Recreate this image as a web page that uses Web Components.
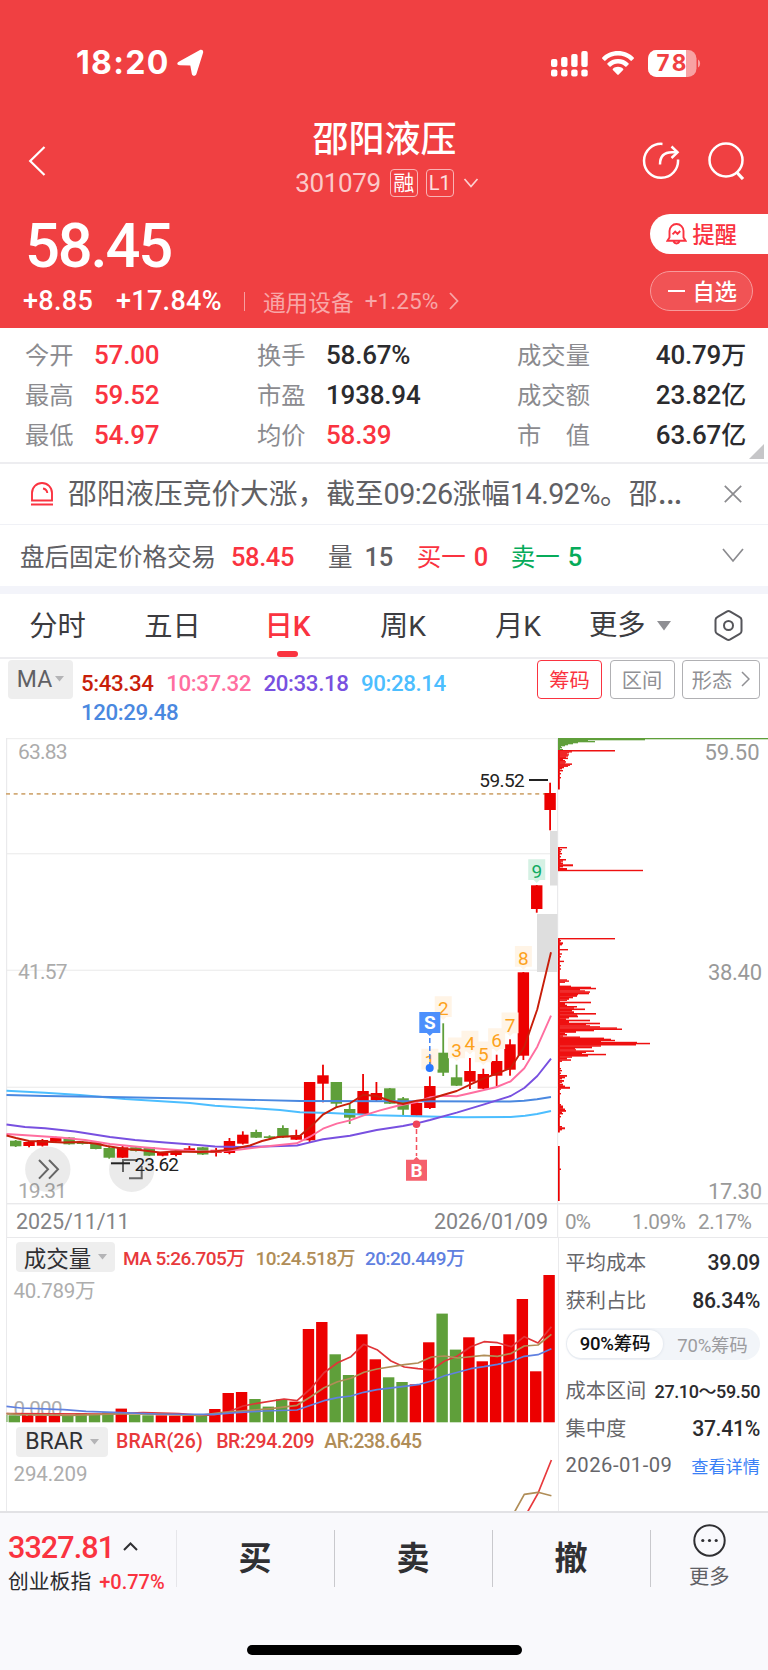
<!DOCTYPE html>
<html lang="zh-CN">
<head>
<meta charset="utf-8">
<title>邵阳液压 301079</title>
<style>
	html, body {
		margin: 0;
		padding: 0;
	}

	body {
		width: 768px;
		height: 1670px;
		overflow: hidden;
		background: #fff;
		font-family: Roboto, "Noto Sans CJK SC", sans-serif;
		color: #2b2b2e;
		--red: #fa3340;
		--green: #06ab5a;
		--head: #f04042;
		--line: #ededf0;
	}
</style>
</head>
<body>
<stock-page></stock-page>

<script>
// Base class: puts the styles and markup of a component into its shadow root
class UiElement extends HTMLElement {
	constructor() {
		super();
		this.attachShadow({ mode: 'open' });
	}

	connectedCallback() {
		this.shadowRoot.innerHTML = `
			<style>
				:host { display: block; box-sizing: border-box; }
				* { box-sizing: border-box; }
				svg { display: block; flex: none; }
				${this.styles()}
			</style>
			${this.html()}
		`;
	}

	styles() {
		return '';
	}

	html() {
		return '';
	}
}

class StatusBar extends UiElement {
	styles() {
		return `
			:host {
				display: flex;
				align-items: center;
				height: 110px;
				padding: 16px 67px 0 76px;
				color: #fff;
			}
			.time { font: 700 32px/40px Inter, sans-serif; width: 101px; letter-spacing: 1.3px; }
			.space { flex: 1; }
			.wifi { margin: 0 14px; }
		`;
	}

	html() {
		const bars = [8, 10, 13, 16].map((h, i) => `
			<rect x="${i * 10.1}" y="${17 - h}" width="6.4" height="${h}" rx="2"/>
			<rect x="${i * 10.1}" y="19.5" width="6.4" height="7" rx="2"/>`).join('');
		return `
			<span class="time">18:20</span>
			<svg width="27" height="28" viewBox="0 0 27 28"><path d="M2.2 12.6 22.5 1.3C24.8 0 26.8 1.4 26 4L19.4 25c-.8 2.5-4.2 2.3-4.6-.3L13.3 16.6 2.8 16.2C-.2 16-.5 14 2.2 12.6z" fill="#fff"/></svg>
			<span class="space"></span>
			<svg width="37" height="27" viewBox="0 0 37 27" fill="#fff">${bars}</svg>
			<svg class="wifi" width="32" height="24" viewBox="0 0 32 24" fill="#fff">
				<path d="M16 0C9.7 0 4 2.5.3 6.4c-.4.4-.4.9 0 1.3l1.9 1.9c.4.4 1 .4 1.3 0C6.7 6.4 11.1 4.6 16 4.6s9.3 1.8 12.5 5c.4.4 1 .4 1.3 0l1.9-1.9c.4-.4.4-.9 0-1.3C28 2.5 22.3 0 16 0z"/>
				<path d="M16 8c-4.1 0-7.8 1.6-10.5 4.2-.4.4-.4.9 0 1.3l2 1.9c.4.4.9.4 1.3 0 1.9-1.8 4.4-2.9 7.2-2.9s5.3 1.1 7.2 2.9c.4.4.9.4 1.3 0l2-1.9c.4-.4.4-.9 0-1.3C23.8 9.6 20.1 8 16 8z"/>
				<path d="M16 15.8c-2 0-3.7.7-5.1 1.9-.4.4-.4.9 0 1.3l4.4 4.6c.4.4 1 .4 1.4 0l4.400-4.600c.4-.4.4-.9 0-1.300-1.400-1.200-3.100-1.900-5.100-1.900z"/>
			</svg>
			<svg width="53" height="27" viewBox="0 0 53 27">
				<clipPath id="b"><rect width="48.5" height="27" rx="8.5"/></clipPath>
				<g clip-path="url(#b)"><rect width="49" height="27" fill="#f8a2a3"/><rect width="38" height="27" fill="#fff"/></g>
				<path d="M50 9.5c2.8 1.2 2.8 6.8 0 8z" fill="#f8a2a3"/>
				<text x="23.5" y="21.3" text-anchor="middle" font-family="Inter" font-weight="700" font-size="22.5" textLength="30" fill="#f04042">78</text>
			</svg>
		`;
	}
}

class StockHeader extends UiElement {
	styles() {
		return `
			:host { background: var(--head); color: #fff; height: 328px; }
			.nav { display: flex; height: 98px; padding: 0 23px 0 28px; align-items: flex-start; }
			.back { margin-top: 36px; }
			.mid { flex: 1; display: flex; flex-direction: column; align-items: center; padding-left: 81px; }
			.name { font-size: 36px; line-height: 40px; font-weight: 500; margin-top: 10px; }
			.code { display: flex; align-items: center; gap: 9px; margin-top: 8px; height: 30px; padding-left: 5px; font-size: 26px; color: #fbc9c9; }
			.code b { font-weight: 400; letter-spacing: -0.4px; }
			.tag { border: 1.5px solid #f9b3b4; border-radius: 4px; width: 28px; height: 28px; display: grid; place-items: center; font-size: 21px; line-height: 26px; color: #fff; }
			.tag.l { font-size: 20px; margin-left: -1px; color: #fde0e0; }
			.icons { display: flex; gap: 28px; margin-top: 32px; }
			.body { display: flex; justify-content: space-between; }
			.price { font-size: 61.5px; line-height: 64px; font-weight: 500; letter-spacing: -2.2px; padding: 6px 0 0 25px; }
			.change { display: flex; align-items: center; height: 30px; margin-top: 8px; padding-left: 23px; font-size: 27px; font-weight: 500; }
			.change span { letter-spacing: .3px; }
			.pct { margin-left: 23px; }
			.change i { width: 1px; height: 19px; background: #f79fa0; margin: 0 18px 0 22px; }
			.sector { display: flex; align-items: center; gap: 11px; font-size: 22.7px; font-weight: 400; color: #f8a6a7; }
			.sector span { letter-spacing: 0; }
			.pills { display: flex; flex-direction: column; align-items: flex-start; width: 118.5px; padding-top: 6px; gap: 17px; }
			.pill { display: flex; align-items: center; height: 40px; font-size: 22.2px; font-weight: 500; border-radius: 20px; }
			.warn { width: 118.5px; background: #fff; color: var(--red); border-radius: 20px 0 0 20px; padding: 0 0 2px 16px; gap: 6px; }
			.fav { width: 103px; background: rgba(255,255,255,.1); border: 1.5px solid #f79a9b; padding: 0 0 2px 17px; gap: 8px; }
			.fav i { width: 17px; height: 2px; background: #fff; margin-top: 2px; }
		`;
	}

	html() {
		return `
			<status-bar></status-bar>
			<div class="nav">
				<svg class="back" width="18" height="30" viewBox="0 0 18 30"><path d="M16.5 1 2.2 15 16.5 29" fill="none" stroke="#fff" stroke-width="2.2"/></svg>
				<div class="mid">
					<div class="name">邵阳液压</div>
					<div class="code"><b>301079</b><span class="tag">融</span><span class="tag l">L1</span>
						<svg width="16" height="10" viewBox="0 0 16 10"><path d="M1.5 1 8 8.5 14.5 1" fill="none" stroke="#fcd0d0" stroke-width="1.7"/></svg>
					</div>
				</div>
				<div class="icons">
					<svg width="38" height="38" viewBox="0 0 38 38" fill="none" stroke="#fff" stroke-width="2.5">
						<path d="M20.5 1.9A17 17 0 1 0 36 17.500M18 22.500c0-8 4-12.200 12-12.200h5"/><path d="m29.500 4.500 6 5.800-6 5.700"/>
					</svg>
					<svg width="37" height="38" viewBox="0 0 37 38" fill="none" stroke="#fff" stroke-width="2.5"><circle cx="18" cy="18" r="16.5"/><path d="m28.500 30 6.500 7" stroke-width="3.2"/></svg>
				</div>
			</div>
			<div class="body">
				<div>
					<div class="price">58.45</div>
					<div class="change"><span>+8.85</span><span class="pct">+17.84%</span><i></i>
						<div class="sector"><span>通用设备</span><span>+1.25%</span>
							<svg width="10" height="18" viewBox="0 0 10 18"><path d="m1 1 7.500 8L1 17" fill="none" stroke="#f8a6a7" stroke-width="1.8"/></svg>
						</div>
					</div>
				</div>
				<div class="pills">
					<div class="pill warn">
						<svg width="21" height="23" viewBox="0 0 21 23" fill="none" stroke="#fa3340" stroke-width="1.900">
							<path d="M3.500 15.500V9a7 7 0 0 1 14 0v6.500l2 3.200H1.500zM7.500 19.500a3.300 3.300 0 0 0 6 0"/><path d="m6.500 12.300 2.700-2.800 2.300 2.300 2.700-2.800"/>
						</svg>提醒</div>
					<div class="pill fav"><i></i>自选</div>
				</div>
			</div>
		`;
	}
}

class QuoteGrid extends UiElement {
	styles() {
		return `
			:host { position: relative; height: 136px; padding: 5px 22px 0 25px; border-bottom: 2px solid var(--line); }
			.row { display: flex; align-items: center; height: 40.2px; font-size: 26px; font-weight: 500; }
			.k { font-size: 24.300px; font-weight: 400; color: #8b8b8f; }
			.k1, .k2 { width: 69px; }
			.k3 { width: 73px; display: flex; justify-content: space-between; }
			.v { padding-top: 4px; line-height: 34px; letter-spacing: -0.2px; }
			.v1 { width: 163px; }
			.v2 { width: 191px; }
			.v3 { flex: 1; text-align: right; }
			.cjk { font-size: 25px; }
			.r { color: var(--red); }
			svg { position: absolute; right: 4px; bottom: 3px; }
		`;
	}

	html() {
		const rows = [
			['今开', '57.00', '换手', '58.67%', '', '成交量', '40.79', '万'],
			['最高', '59.52', '市盈', '1938.94', '', '成交额', '23.82', '亿'],
			['最低', '54.97', '均价', '58.39', 'r', '市值', '63.67', '亿'],
		];
		return rows.map(([k1, v1, k2, v2, cls, k3, v3, unit]) => `
			<div class="row">
				<span class="k k1">${k1}</span><span class="v v1 r">${v1}</span>
				<span class="k k2">${k2}</span><span class="v v2 ${cls}">${v2}</span>
				<span class="k k3">${[...k3].map((c) => `<span>${c}</span>`).join('')}</span>
				<span class="v v3">${v3}<span class="cjk">${unit}</span></span>
			</div>`).join('') + `
			<svg width="15" height="15"><path d="M15 0v15H0z" fill="#c6c6c8"/></svg>`;
	}
}

class NewsBar extends UiElement {
	styles() {
		return `
			:host { display: flex; align-items: center; height: 61px; padding: 0 26px 0 30px; border-bottom: 1.5px solid #f0f1f6; }
			p { margin: 0 0 0 14px; flex: 1; font-size: 28.7px; line-height: 40px; color: #606064; white-space: nowrap; }
			p b { font-weight: 400; letter-spacing: -0.5px; }
			p span { font-size: 38px; line-height: 0; }
		`;
	}

	html() {
		return `
			<svg width="24" height="24" viewBox="0 0 24 24" fill="none" stroke="#fa3340" stroke-width="1.900">
				<path d="M2 18.500v-7.500a10 10 0 0 1 20 0v7.500zM1 22.500h22"/><path d="M13 6.500c2.500.4 4 2 4.300 4.500"/>
			</svg>
			<p>邵阳液压竞价大涨，截至<b>09:26</b>涨幅<b>14.92%</b>。邵<span>…</span></p>
			<svg width="18" height="18" viewBox="0 0 18 18"><path d="m.8.8 16.400 16.400M17.200.8.8 17.200" stroke="#8b8b8f" stroke-width="1.700"/></svg>
		`;
	}
}

class AfterHoursBar extends UiElement {
	styles() {
		return `
			:host { display: flex; align-items: center; height: 69px; padding: 2px 24px 3px 20px; border-bottom: 8px solid #f3f4fa; font-size: 24.5px; color: #606064; white-space: nowrap; }
			b { font-weight: 500; font-size: 25.5px; padding-top: 3px; letter-spacing: -0.4px; }
			.r { color: var(--red); }
			.g { color: var(--green); }
			svg { margin-left: auto; }
		`;
	}

	html() {
		return `
			<span>盘后固定价格交易</span><b class="r" style="margin-left:15px">58.45</b>
			<span style="margin-left:34px">量</span><b style="margin-left:12px">15</b>
			<span class="r" style="margin-left:24px">买一</span><b class="r" style="margin-left:8px">0</b>
			<span class="g" style="margin-left:23px">卖一</span><b class="g" style="margin-left:8px">5</b>
			<svg width="22" height="15" viewBox="0 0 22 15"><path d="m1 1 10 12L21 1" fill="none" stroke="#8b8b8f" stroke-width="1.700"/></svg>
		`;
	}
}

class PeriodTabs extends UiElement {
	styles() {
		return `
			:host { display: grid; grid-template-columns: 115px 115px 115px 116px 114px 108px 85px; height: 64.5px; border-bottom: 2px solid var(--line); font-size: 28.3px; color: #3c3c40; white-space: nowrap; }
			div { display: flex; flex-direction: column; align-items: center; line-height: 65px; height: 63px; }
			.on { color: var(--red); font-weight: 500; }
			.on::after { content: ""; width: 21px; height: 6px; border-radius: 3px; background: var(--red); margin-top: -8px; }
			.more { flex-direction: row; gap: 11px; padding-left: 14px; }
			.set { flex-direction: row; justify-content: flex-end; padding-right: 25px; }
		`;
	}

	html() {
		return `
			<div>分时</div><div>五日</div><div class="on">日K</div><div>周K</div><div>月K</div>
			<div class="more">更多<svg width="14" height="10"><path d="M0 0h14L7 9.500z" fill="#8f8f93"/></svg></div>
			<div class="set"><svg width="29" height="31" viewBox="0 0 29 31" fill="none" stroke="#55555a" stroke-width="2">
				<path d="M12.700 1.600q1.800-1 3.600 0l9.400 5.500q1.800 1 1.800 3v10.800q0 2-1.800 3l-9.400 5.500q-1.800 1-3.600 0l-9.400-5.500q-1.800-1-1.800-3V10.100q0-2 1.800-3z"/><circle cx="14.500" cy="15.500" r="4.500"/>
			</svg></div>
		`;
	}
}

// Grey button with a small arrow, the label comes from the slot
class DropTag extends UiElement {
	styles() {
		return `
			:host { display: flex; align-items: center; justify-content: center; gap: 3px; background: #eee; border-radius: 4px; color: #303033; }
		`;
	}

	html() {
		return `<slot></slot><svg width="9" height="6"><path d="M0 0h9L4.500 5.500z" fill="#b4b4b6"/></svg>`;
	}
}

class IndicatorRow extends UiElement {
	styles() {
		return `
			:host { display: flex; height: 79.5px; padding: 1.500px 8px 0; }
			drop-tag { width: 65px; height: 38.500px; font-size: 23px; color: #606064; }
			.ma { flex: 1; padding: 9px 0 0 8px; display: flex; flex-wrap: wrap; align-content: flex-start; column-gap: 12.500px; font-size: 22.300px; line-height: 29px; font-weight: 500; letter-spacing: -0.400px; }
			.btns { display: flex; gap: 7.500px; }
			.btns span { display: flex; align-items: center; justify-content: center; gap: 9px; width: 65px; height: 38.500px; padding-bottom: 1px; border: 1.500px solid #b0b0b3; border-radius: 4px; font-size: 20.300px; color: #909094; }
			.btns .on { border-color: var(--red); color: var(--red); }
			.btns .w { width: 78px; }
		`;
	}

	html() {
		return `
			<drop-tag>MA</drop-tag>
			<div class="ma">
				<span style="color:#c81e0a">5:43.34</span><span style="color:#ff6ea0">10:37.32</span>
				<span style="color:#7850e0">20:33.18</span><span style="color:#4cbeff">90:28.14</span>
				<span style="color:#4a88e0">120:29.48</span>
			</div>
			<div class="btns"><span class="on">筹码</span><span>区间</span>
				<span class="w">形态<svg width="9" height="16" viewBox="0 0 9 16"><path d="m1 1 7 7-7 7" fill="none" stroke="#909094" stroke-width="1.500"/></svg></span>
			</div>
		`;
	}
}

// Small helpers for the chart markup
const UP = '#ec0000';
const DOWN = '#5f9f3a';
const text = (x, y, size, len, color, str, weight = 400) =>
	`<text x="${x}" y="${y}" font-size="${size}" textLength="${len}" fill="${color}" font-weight="${weight}">${str}</text>`;
const line = (pts, color, width = 1.9) =>
	`<polyline points="${pts}" fill="none" stroke="${color}" stroke-width="${width}" stroke-linejoin="round"/>`;
const rect = (x, y, w, h, color) => `<rect x="${x}" y="${y}" width="${w}" height="${h}" fill="${color}"/>`;

// body top, body bottom, high, low, 1 = up / 0 = down
const CANDLES = [
	[1140.7, 1146.3, 1140, 1147, 0], [1142, 1146, 1141, 1147.3, 1], [1140, 1145.7, 1139, 1146.5, 1],
	[1138, 1141.7, 1136.7, 1142, 1], [1137.5, 1144.3, 1137, 1144.5, 0], [1141.7, 1144, 1141, 1144.5, 0],
	[1143, 1149, 1143, 1149.3, 0], [1148, 1157.7, 1147, 1158.7, 0], [1147.3, 1157.7, 1146, 1158, 1],
	[1147.3, 1151, 1146.5, 1151.5, 0], [1147.3, 1155.7, 1147, 1156, 0], [1152.7, 1155.7, 1152, 1156.3, 1],
	[1150.7, 1155, 1150, 1156.3, 1], [1148.3, 1150.5, 1146, 1151, 1], [1147.3, 1154.5, 1147, 1155, 0],
	[1149.8, 1152.8, 1148, 1156.5, 1], [1141, 1153, 1138, 1154.3, 1], [1134.7, 1143.7, 1131.3, 1144.5, 1],
	[1132, 1137.7, 1129.7, 1138, 0], [1136.3, 1138, 1135.3, 1140, 0], [1128, 1137.3, 1125.3, 1138, 0],
	[1135.5, 1139.7, 1129.7, 1140, 1], [1082, 1140.3, 1082, 1142.3, 1], [1075.3, 1083.7, 1064.7, 1102.3, 1],
	[1082, 1103.7, 1082, 1107, 0], [1109, 1117.7, 1104, 1124, 0], [1091, 1114, 1074, 1115, 1],
	[1093, 1100, 1082, 1101, 1], [1088.3, 1103.7, 1088, 1104, 0], [1098.3, 1109.7, 1097, 1115, 0],
	[1103, 1115.7, 1102, 1116, 1], [1086, 1108, 1076.3, 1109, 1], [1052.7, 1072.7, 1023.3, 1076, 0],
	[1077.3, 1085.7, 1064.7, 1086, 0], [1071, 1081.7, 1058, 1089, 1], [1074, 1088.7, 1068.7, 1089, 1],
	[1061, 1075.7, 1054.7, 1086, 1], [1044.3, 1069.7, 1039.3, 1075.7, 1], [972.3, 1055.7, 972, 1060, 1],
	[885.3, 909, 885, 912.7, 1], [793, 810, 782.7, 830.3, 1],
];

const MA5 = '6.5,1135.500 16,1138 29,1141 42,1141.500 63,1142.500 80,1142 95,1143.500 107,1146 125,1149 140,1150 160,1152.500 175,1151.500 200,1152 215,1151.500 230,1149.500 250,1145.500 262,1141 278,1137 300,1135.700 311.700,1125.700 323.300,1114.300 336,1107.300 350,1103.300 363.300,1094.700 376.700,1096 390,1101 403,1104 416.700,1100.700 430,1099 443,1095 456.700,1091 470,1084.700 483.300,1078.700 496.700,1073.700 510.700,1068 524.300,1046.700 537.300,1009.300 551,952.300';
const MA10 = '6.5,1134 30,1135.500 60,1137.500 85,1140 110,1144 140,1147 170,1149.500 200,1151.500 215,1151.500 240,1149.500 270,1146 296.700,1143.300 310,1136.700 323,1128.700 336.700,1123.700 350,1120.300 363,1115.700 380,1110.300 396.700,1106 416.700,1102 430,1097.300 443,1095.700 456.700,1096.300 470,1093.300 496.700,1087 510.700,1081.300 524.300,1068.300 537.300,1046.700 551,1015.700';
const MA20 = '6.5,1124.500 25,1127 45,1128.300 75,1131.500 110,1137 135,1140 165,1142.500 195,1144.800 215,1146.500 240,1147 265,1146.500 297,1145.500 310,1142.300 323,1139.300 350,1135.700 376.700,1130 403,1126 416.700,1123.300 430,1120 456.700,1112.700 483.300,1104.700 510.700,1096 524.300,1088 537.300,1076 551,1058.700';
const MA90 = '6.5,1090.800 45,1092.700 80,1095 125,1099 190,1103 215,1105.700 280,1110 300,1112.300 330,1113 376.700,1115.300 416.700,1116.300 463.300,1117.300 510.700,1117 525,1115.700 537,1114 551,1111';
const MA120 = '6.5,1095 45,1096 110,1097 215,1099 300,1101 510,1101.500 524,1100.700 537,1099.300 551,1097';

// Chip distribution: price row and length of its bar
const CHIPS_GREEN = [[737.8, 210], [739, 87], [740, 30], [741, 37], [742, 20], [743, 15], [744, 10], [745, 7], [746, 3], [747, 4], [748, 2], [749, 5]];
const CHIPS_RED = [
	[750, 57], [751.2, 14], [752.2, 11], [753.2, 9], [754.2, 11], [755.2, 10], [756.4, 8], [757.6, 10], [758.8, 5], [760, 7], [761.2, 8], [762.4, 7], [763.4, 14], [764.6, 12], [765.6, 10], [766.6, 6], [768, 4], [770, 5], [773, 3], [777, 3],
	[847, 9], [849, 4], [851, 3], [853, 4], [856, 3], [859, 8], [860.2, 5], [861.5, 3], [862.5, 5], [864.3, 15], [866, 5], [868, 9], [869.8, 85],
	[938, 57], [940, 3], [942.3, 5], [944, 4], [949, 10], [953.3, 4], [956, 3], [960.7, 6], [965, 3], [968.3, 3], [979.3, 9], [980.4, 11], [981.5, 7],
	[985.6, 13], [986.7, 33], [987.8, 38], [989, 22], [990.3, 27], [991.3, 32], [992.5, 31], [994, 20], [995, 19], [996.5, 15], [998, 11], [999.5, 9], [1001.7, 33], [1003, 7], [1004.7, 9], [1006, 19], [1007.2, 16], [1008.5, 27], [1009.8, 14], [1011.3, 16], [1013, 38], [1014.3, 19], [1015.6, 20], [1017, 11], [1018.3, 8], [1019.7, 32], [1021, 11], [1022.7, 42], [1024, 28], [1025.2, 32], [1026.2, 42], [1027.4, 59], [1028.5, 64], [1029.7, 36], [1031, 18], [1032.5, 7], [1034, 9], [1035.3, 5],
	[1036.5, 22], [1037.6, 46], [1038.7, 53], [1039.8, 57], [1040.9, 43], [1041.8, 79], [1042.8, 92], [1044, 78], [1045.2, 43], [1046.4, 34], [1048, 17], [1049.2, 18], [1050.4, 36], [1051.6, 28], [1052.7, 24], [1053.8, 48], [1055, 30], [1056.3, 14], [1057.5, 9], [1059.3, 13], [1060.5, 4],
	[1068, 3], [1070, 4], [1072.5, 3], [1075, 9], [1076.5, 7], [1078, 4], [1080, 6], [1081.5, 4], [1083.7, 5], [1085.5, 7], [1086.8, 12], [1088.5, 3], [1093, 3], [1104, 3], [1105.5, 5], [1107, 5], [1108.5, 7], [1110, 8], [1111.5, 4], [1113, 5], [1116, 3], [1126, 4], [1127.3, 7], [1129, 4], [1168.5, 3],
];

// Signal numbers over the candles: candle index, text centre, label
const MARKS = [[31, 1061.5, 1], [32, 1009, 2], [33, 1050.3, 3], [34, 1043.5, 4], [35, 1054.3, 5], [36, 1041, 6], [37, 1025.3, 7], [38, 958.7, 8], [39, 872, 9]];

class KlineChart extends UiElement {
	styles() {
		return `:host { height: 500px; }`;
	}

	x(i) {
		return 15.7 + 13.36 * i;
	}

	grid() {
		const ys = [738.5, 853.7, 970.3, 1087.3];
		return ys.map((y) => rect(6, y - 0.7, 552, 1.4, '#efefef')).join('') +
			rect(6, 1203, 762, 1.4, '#e9e9eb') + rect(6, 1237, 762, 1.4, '#e9e9eb') +
			rect(6, 738, 1.2, 500, '#eaeaec') + rect(557, 738, 1.2, 500, '#eaeaec');
	}

	candles() {
		return CANDLES.map(([top, bottom, high, low, up], i) => {
			const c = up ? UP : DOWN;
			return rect(this.x(i) - 0.9, high, 1.8, low - high, c) + rect(this.x(i) - 5.7, top, 11.4, bottom - top, c);
		}).join('');
	}

	marks() {
		return MARKS.map(([i, y, n]) => {
			const x = this.x(i);
			const nine = n === 9;
			return `
				<path d="M${x - 8.5} ${y - 12.7}h17v20.7h-5.5l-3 3-3-3h-5.5z" fill="${nine ? '#d5f1e4' : '#fff4e6'}"/>
				<text x="${x}" y="${y + 6.4}" font-size="19" text-anchor="middle" fill="${nine ? '#12ab62' : '#fda21c'}">${n}</text>`;
		}).join('');
	}

	// Neighbouring rows are joined so dense parts read as one mass
	bars(rows, color) {
		return rows.map(([y, len], i) => {
			const gap = i + 1 < rows.length ? rows[i + 1][0] - y : 1.2;
			return rect(558, y, len, gap < 2 ? gap + 0.3 : 1.4, color);
		}).join('');
	}

	html() {
		return `
			<svg width="768" height="500" viewBox="0 738 768 500">
				${this.grid()}
				${rect(550, 831, 7.5, 54.5, '#dedede')}${rect(537, 914, 20.5, 58, '#dedede')}
				${text(18, 759.3, 21, 49.5, '#ababab', '63.83')}
				${text(18, 979, 21, 49.5, '#ababab', '41.57')}
				${text(18, 1198.2, 21, 49, '#ababab', '19.31')}
				<path d="M6 793.8h551" stroke="#d2ab78" stroke-width="1.8" stroke-dasharray="4 3.67"/>
				<circle cx="47.8" cy="1169.3" r="22.7" fill="#000" opacity=".08"/>
				<circle cx="131.7" cy="1169.3" r="22.7" fill="#000" opacity=".08"/>
				${this.candles()}
				${line(MA90, '#4cbeff')}${line(MA120, '#4a88e0')}${line(MA20, '#7850e0')}${line(MA10, '#ff6ea0')}${line(MA5, '#c81e0a')}
				${this.marks()}
				<path d="m39 1160 9 9.300-9 9.300M49 1160l9 9.300-9 9.300M123 1172v-12h14.500M141.700 1166v12.200H129" fill="none" stroke="#666" stroke-width="2"/>
				${rect(111, 1162.3, 19, 2, '#222')}${text(134.5, 1170.8, 19, 44.5, '#222', '23.62')}
				${rect(529, 779, 19, 2, '#222')}${text(479.3, 786.8, 19, 45.5, '#222', '59.52')}
				<path d="M429.8 1038v27" stroke="#3c82f6" stroke-width="1.5" stroke-dasharray="5 3"/>
				<path d="M419.3 1012h21v21h-7.5l-3 3-3-3h-7.5z" fill="#4c8ffc"/>
				<circle cx="429.7" cy="1068" r="4" fill="#2878ff"/>
				<path d="M416.5 1129v27" stroke="#f4505e" stroke-width="1.5" stroke-dasharray="5 3"/>
				<circle cx="416.5" cy="1124.3" r="3.8" fill="#f0445a"/>
				<path d="M406 1159.7h7.5l3-3 3 3h7.5v21h-21z" fill="#f5606c"/>
				<g fill="#fff" font-weight="700" font-size="19" text-anchor="middle"><text x="429.8" y="1029.3">S</text><text x="416.5" y="1177">B</text></g>
				${rect(558, 750, 1.8, 39.5, UP)}${rect(558, 847, 1.8, 23.5, UP)}${rect(558, 938, 1.8, 194.5, UP)}${rect(558, 1146, 1.7, 55, UP)}
				${this.bars(CHIPS_GREEN, DOWN)}${this.bars(CHIPS_RED, '#ee1010')}
				${text(704.5, 759.7, 22, 55, '#999', '59.50')}
				${text(708, 979.5, 22, 54, '#999', '38.40')}
				${text(708, 1199, 22, 54, '#999', '17.30')}
				${text(16, 1229.3, 21.5, 113.5, '#848486', '2025/11/11')}
				${text(434, 1229.3, 21.5, 114, '#848486', '2026/01/09')}
				${text(565, 1229, 20.7, 26, '#999', '0%')}
				${text(632, 1229, 20.7, 54, '#999', '1.09%')}
				${text(698, 1229, 20.7, 54, '#999', '2.17%')}
			</svg>
		`;
	}
}

// Height of each volume bar, negative for a falling day
const VOLUMES = [-7, 7.3, 7, 7, -6.5, -9, -8, -10, 13.7, -7.3, -7, 7, 6.7, 6.3, -6.3, 13.3, 29.3, 30.3, -23.3, -15.7, -23, 20.7, 93.3, 100.3, -68, -47.3, 88, 63, -45, -40.3, 38, 80, -108.7, -72.7, 85, 61, 76.3, 88, 123.3, 51, 147.3];
const VOL_MA5 = '6.5,1413.700 107,1414 143,1412.700 179,1413.700 200,1415.300 214,1415 228.600,1411.700 243,1406 257,1403.300 284,1399 297,1400.700 310.700,1388.700 324,1372.700 337.500,1362.700 351,1356.700 363.600,1344.300 377,1349.700 391,1361 404.300,1367 418,1368.700 431.400,1370 444.600,1361 457,1356.300 470.700,1346.700 484,1341.700 497.500,1342.700 511.400,1346.700 524.300,1336.700 538,1343 551.400,1326.700';
const VOL_MA10 = '6.5,1413.700 21,1414.700 71,1415.300 125,1413.700 161,1414.300 200,1415.300 221,1412.700 250,1410.300 271,1408.700 297,1405.300 310.700,1396.700 324,1387.700 337.500,1381.700 351,1378.300 364,1372.300 377,1369 404.300,1364.700 418,1363 431.400,1357 444.600,1356 458,1358 484,1355.300 497.500,1356.300 511.400,1353.300 524.300,1346 538,1345 551.400,1334.300';
const VOL_MA20 = '6.5,1406.300 21,1408 64,1409.700 86,1411.300 121,1412.700 157,1414 214,1414.300 236,1412.700 264,1411 297,1410 310.700,1405.300 324,1400.700 337.500,1397.700 351,1396 363.600,1392.300 377,1389.700 404.300,1386.300 419.600,1384.300 431.400,1381 444.600,1375.700 470.700,1368.700 484,1366.700 497.500,1364.300 511.400,1361.300 524.300,1356.300 538,1354.700 551.400,1348.700';

class SubCharts extends UiElement {
	styles() {
		return `
			:host { width: 552.5px; border-left: 1px solid #eaeaec; border-right: 1.5px solid #eaeaec; margin-left: 6px; }
			.head { display: flex; align-items: center; padding-left: 9px; font-weight: 500; white-space: nowrap; }
			.vol { height: 34px; padding-top: 3px; font-size: 19px; letter-spacing: -0.55px; }
			.brar { height: 34px; padding-top: 3px; font-size: 19.5px; letter-spacing: -0.35px; }
			drop-tag { height: 30px; gap: 7px; font-weight: 400; letter-spacing: 0; }
			.vol drop-tag { width: 99px; font-size: 22.5px; margin-right: 8px; }
			.brar drop-tag { width: 92px; font-size: 23px; margin-right: 8px; }
			.r { color: #e8393c; }
			.t { color: #b08d57; }
			.b { color: #6080e0; }
			svg { margin-left: -7px; }
		`;
	}

	html() {
		const bars = VOLUMES.map((v, i) => {
			const h = Math.abs(v);
			return rect(8.6 + 13.37 * i, 1422.3 - h, 11.4, h, v > 0 ? UP : DOWN);
		}).join('');
		return `
			<div class="head vol"><drop-tag>成交量</drop-tag><span class="r">MA 5:26.705万</span>
				<span class="t" style="margin-left:11px">10:24.518万</span><span class="b" style="margin-left:10px">20:20.449万</span></div>
			<svg width="558" height="151" viewBox="0 1272 558 151">
				${text(13.5, 1298, 20.5, 82, '#adadad', '40.789万')}
				${bars}
				${rect(6.5, 1415, 1, 7, DOWN)}
				${text(13.5, 1415.5, 20.5, 49, '#adadad', '0.000')}
				${line(VOL_MA5, '#e03438', 1.7)}${line(VOL_MA10, '#b08d57', 1.7)}${line(VOL_MA20, '#6080e0', 1.7)}
			</svg>
			<div class="head brar"><drop-tag>BRAR</drop-tag><span class="r" style="letter-spacing:.2px">BRAR(26)</span>
				<span class="r" style="margin-left:13px">BR:294.209</span><span class="t" style="margin-left:10px;letter-spacing:-.5px">AR:238.645</span></div>
			<svg width="558" height="55" viewBox="0 1457 558 55">
				${text(13.5, 1481, 20.5, 74, '#adadad', '294.209')}
				${line('527.500,1512 538,1493.300 551.400,1460', '#e8393c', 1.7)}
				${line('514.500,1512 524.300,1494.300 538,1492.300 551.400,1495.700', '#b08d57', 1.7)}
			</svg>
		`;
	}
}

class ChipStats extends UiElement {
	styles() {
		return `
			:host { flex: 1; padding: 4px 8.5px 0 7px; font-size: 20.2px; color: #66666a; }
			.row { display: flex; justify-content: space-between; align-items: center; height: 38px; white-space: nowrap; }
			b { font-weight: 500; font-size: 21.2px; color: #2b2b2e; letter-spacing: -0.3px; padding-top: 2px; }
			b.s { font-size: 18px; letter-spacing: -0.4px; }
			.seg { display: flex; align-items: center; width: 194.5px; height: 32px; margin: 10px 0; border-radius: 16px; background: #f2f5f9; font-size: 18.5px; letter-spacing: -0.2px; color: #9c9ca0; }
			.seg span { flex: 1; text-align: center; padding-left: 2px; }
			.seg .on { flex: none; width: 96px; height: 28px; line-height: 28px; margin-left: 1.5px; padding: 0; border-radius: 14px; background: #fff; color: #111; font-weight: 500; box-shadow: 0 0 3px rgba(0,40,80,.12); }
			.date { letter-spacing: .5px; }
			a { font-size: 17.2px; color: #3a80f6; }
		`;
	}

	html() {
		return `
			<div class="row">平均成本<b>39.09</b></div>
			<div class="row">获利占比<b>86.34%</b></div>
			<div class="seg"><span class="on">90%筹码</span><span>70%筹码</span></div>
			<div class="row">成本区间<b class="s">27.10～59.50</b></div>
			<div class="row">集中度<b>37.41%</b></div>
			<div class="row"><span class="date">2026-01-09</span><a>查看详情</a></div>
		`;
	}
}

class TradeBar extends UiElement {
	styles() {
		return `
			:host { height: 160px; background: #f9f9fc; border-top: 2px solid #e2e2e5; }
			.bar { display: flex; align-items: center; height: 92px; }
			.idx { width: 175.5px; padding: 8px 0 0 8px; }
			.num { display: flex; align-items: center; gap: 9px; font-size: 30.5px; line-height: 36px; color: var(--red); font-weight: 500; letter-spacing: -0.9px; }
			.num svg { margin-top: -3px; }
			.sub { display: flex; gap: 8px; font-size: 20.8px; line-height: 28px; white-space: nowrap; margin-top: 2px; }
			.sub span { color: var(--red); font-size: 20px; font-weight: 500; }
			.act { width: 158px; height: 57px; line-height: 57px; border-left: 1.5px solid #c9c9cd; text-align: center; font-size: 33px; font-weight: 700; color: #303033; }
			.act.first { border-color: #e6e6ea; }
			.more { flex: 1; height: 57px; border-left: 1.5px solid #c9c9cd; display: flex; flex-direction: column; align-items: center; font-size: 20.3px; line-height: 26px; color: #606064; }
			.more svg { margin: -6px 0 7px; }
			.home { width: 275px; height: 10px; border-radius: 5px; background: #000; margin: 40px 0 0 246.5px; }
		`;
	}

	html() {
		return `
			<div class="bar">
				<div class="idx">
					<div class="num">3327.81<svg width="15" height="9" viewBox="0 0 15 9"><path d="m1 8 6.500-6.500L14 8" fill="none" stroke="#303033" stroke-width="2"/></svg></div>
					<div class="sub">创业板指<span>+0.77%</span></div>
				</div>
				<div class="act first">买</div><div class="act">卖</div><div class="act">撤</div>
				<div class="more">
					<svg width="33" height="33" viewBox="0 0 33 33"><circle cx="16.5" cy="16.5" r="15.2" fill="none" stroke="#303033" stroke-width="2"/><g fill="#303033"><circle cx="9.8" cy="16.5" r="1.6"/><circle cx="16.5" cy="16.5" r="1.6"/><circle cx="23.2" cy="16.5" r="1.6"/></g></svg>
					更多
				</div>
			</div>
			<div class="home"></div>
		`;
	}
}

class StockPage extends UiElement {
	styles() {
		return `
			:host { height: 1670px; overflow: hidden; display: flex; flex-direction: column; background: #f9f9fc; }
			:host > * { flex: none; }
			stock-header ~ * { background: #fff; }
			.lower { display: flex; height: 272.5px; overflow: hidden; }
			trade-bar { background: #f9f9fc; }
		`;
	}

	html() {
		return `
			<stock-header></stock-header>
			<quote-grid></quote-grid>
			<news-bar></news-bar>
			<after-hours-bar></after-hours-bar>
			<period-tabs></period-tabs>
			<indicator-row></indicator-row>
			<kline-chart></kline-chart>
			<div class="lower"><sub-charts></sub-charts><chip-stats></chip-stats></div>
			<trade-bar></trade-bar>
		`;
	}
}

customElements.define('status-bar', StatusBar);
customElements.define('stock-header', StockHeader);
customElements.define('quote-grid', QuoteGrid);
customElements.define('news-bar', NewsBar);
customElements.define('after-hours-bar', AfterHoursBar);
customElements.define('period-tabs', PeriodTabs);
customElements.define('drop-tag', DropTag);
customElements.define('indicator-row', IndicatorRow);
customElements.define('kline-chart', KlineChart);
customElements.define('sub-charts', SubCharts);
customElements.define('chip-stats', ChipStats);
customElements.define('trade-bar', TradeBar);
customElements.define('stock-page', StockPage);
</script>
</body>
</html>
